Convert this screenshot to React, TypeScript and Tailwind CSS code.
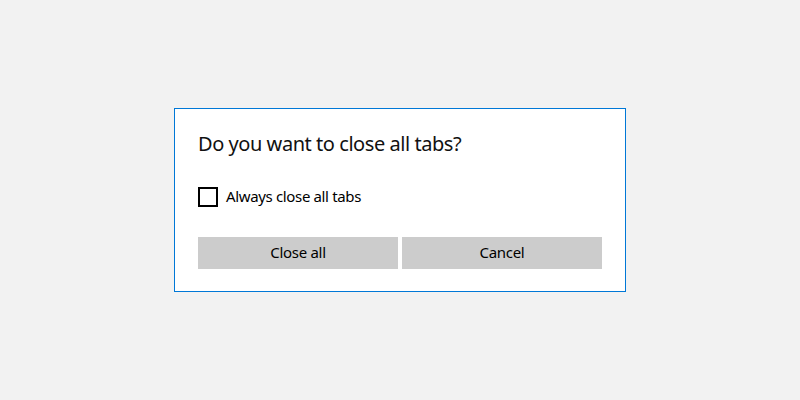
export default function App() {
  return (
    <div
      className="w-[800px] h-[400px] bg-[#f2f2f2] flex items-start justify-center pt-[108px]"
      style={{ fontFamily: '"Noto Sans", "Open Sans", sans-serif' }}
    >
      <div className="w-[452px] h-[184px] bg-white border border-[#0078d7] p-[23px] flex flex-col">
        <div className="text-[20px] leading-[24px] tracking-[-0.45px] text-[#111]">Do you want to close all tabs?</div>
        <label className="mt-[31px] flex items-center h-[20px]">
          <span className="w-[20px] h-[20px] border-2 border-black bg-white" />
          <span className="ml-[8px] pb-[2px] text-[15px] tracking-[-0.35px] text-black">Always close all tabs</span>
        </label>
        <div className="mt-[30px] flex gap-[4px]">
          <button className="w-[200px] h-[32px] pb-[2px] bg-[#cccccc] text-[15px] tracking-[-0.3px] text-black">Close all</button>
          <button className="w-[200px] h-[32px] pb-[2px] bg-[#cccccc] text-[15px] tracking-[-0.3px] text-black">Cancel</button>
        </div>
      </div>
    </div>
  );
}
